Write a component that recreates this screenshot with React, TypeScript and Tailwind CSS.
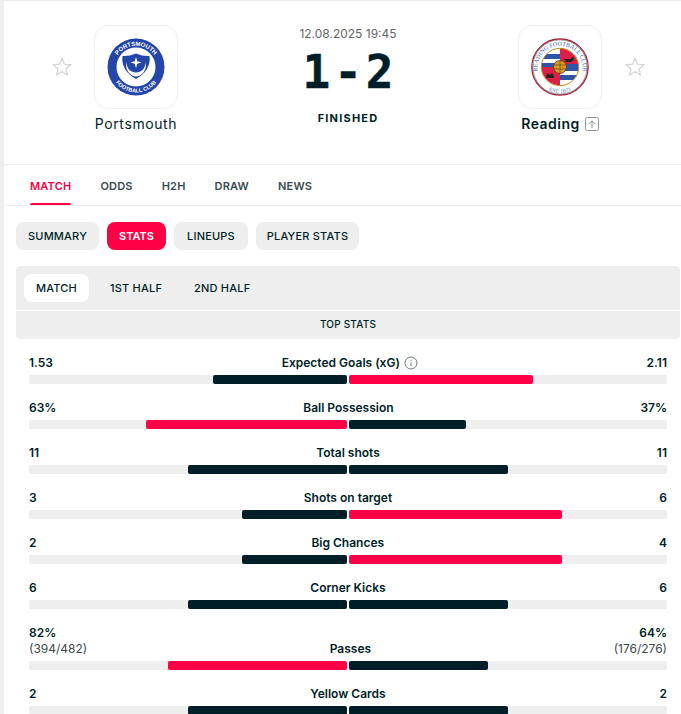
const stats = [
  { left: '1.53', right: '2.11', label: 'Expected Goals (xG)', l: 42.1, r: 57.9, info: true },
  { left: '63%', right: '37%', label: 'Ball Possession', l: 63.2, r: 36.8 },
  { left: '11', right: '11', label: 'Total shots', l: 50, r: 50 },
  { left: '3', right: '6', label: 'Shots on target', l: 33, r: 67 },
  { left: '2', right: '4', label: 'Big Chances', l: 33, r: 67 },
  { left: '6', right: '6', label: 'Corner Kicks', l: 50, r: 50 },
];

function Star() {
  return (
    <svg width="20" height="20" viewBox="0 0 20 20" fill="none" stroke="#d3d6d6" strokeWidth="1.3">
      <path d="M10 1.5l2.5 5.7 6.2.6-4.7 4.1 1.4 6.1L10 14.8l-5.4 3.2L6 11.9 1.3 7.8l6.2-.6z" />
    </svg>
  );
}

function Portsmouth() {
  return (
    <svg width="58" height="58" viewBox="0 0 58 58">
      <circle cx="29" cy="29" r="28.5" fill="#2446a8" />
      <circle cx="29" cy="29" r="19.5" fill="#fff" />
      <path d="M15.500 18Q22 18.500 29 15.500Q36 18.500 42.500 18C44 28 38 36 29 41C20 36 14 28 15.500 18z" fill="#2446a8" />
      <path d="M19 24C18 33 24 38.500 29 38.500C34 38.500 40 33 39 24C38 31 34 34.500 29 34.500C24 34.500 20 31 19 24z" fill="#fff" />
      <path d="M29 19l1.300 4.200 4.200 1.300-4.200 1.300-1.300 4.200-1.300-4.200-4.200-1.300 4.200-1.300z" fill="#fff" />
      <defs>
        <path id="pTop" d="M7 35A22.500 22.500 0 1 1 51 35" />
        <path id="pBottom" d="M6 40A25.500 25.500 0 0 0 52 40" />
      </defs>
      <text fontFamily="Liberation Sans, sans-serif" fontSize="6" fontWeight="700" fill="#fff">
        <textPath href="#pTop" startOffset="50%" textAnchor="middle">PORTSMOUTH</textPath>
      </text>
      <text fontFamily="Liberation Sans, sans-serif" fontSize="5.500" fontWeight="700" fill="#fff">
        <textPath href="#pBottom" startOffset="50%" textAnchor="middle">FOOTBALL CLUB</textPath>
      </text>
    </svg>
  );
}

function Reading() {
  return (
    <svg width="58" height="58" viewBox="0 0 58 58">
      <circle cx="29" cy="29" r="28.200" fill="#fff" stroke="#b3162f" strokeWidth="1.200" />
      <circle cx="29" cy="29" r="27.200" fill="none" stroke="#222" strokeWidth=".5" />
      <defs>
        <clipPath id="shield"><circle cx="29" cy="29" r="18.500" /></clipPath>
        <path id="rTop" d="M8 39A22.700 22.700 0 1 1 50 39" />
        <path id="rBottom" d="M15 51A26 26 0 0 0 43 51" />
      </defs>
      <text fontFamily="Liberation Serif, serif" fontSize="6" fill="#3a66b0">
        <textPath href="#rTop" startOffset="50%" textAnchor="middle">READING FOOTBALL CLUB</textPath>
      </text>
      <text fontFamily="Liberation Serif, serif" fontSize="5.500" fill="#3a66b0">
        <textPath href="#rBottom" startOffset="50%" textAnchor="middle">EST. 1871</textPath>
      </text>
      <g clipPath="url(#shield)">
        <rect x="10" y="10" width="19" height="19" fill="#fff" />
        <rect x="10" y="16" width="19" height="5" fill="#2c55a8" />
        <rect x="10" y="25" width="19" height="4" fill="#2c55a8" />
        <rect x="29" y="10" width="19" height="19" fill="#dc1f48" />
        <rect x="10" y="29" width="19" height="19" fill="#dc1f48" />
        <rect x="29" y="29" width="19" height="19" fill="#fff" />
        <rect x="29" y="29" width="19" height="4" fill="#2c55a8" />
        <rect x="29" y="37" width="19" height="5" fill="#2c55a8" />
        <rect x="36" y="26" width="12" height="4" fill="#2c55a8" />
        <path d="M33 21h7l2-3 1 4-3 2h-5z" fill="#222" />
        <path d="M15 38l2-3 2 2 2-2 2 3v2h-8z" fill="#222" />
      </g>
      <circle cx="29" cy="29" r="18.700" fill="none" stroke="#c68a1d" strokeWidth="1" />
      <circle cx="29" cy="29" r="6.500" fill="#d9982a" stroke="#5c3c0a" strokeWidth=".8" />
      <path d="M23 27h12M23 31h12M29 23v12" stroke="#5c3c0a" strokeWidth=".6" />
    </svg>
  );
}

function Bar({ l, r, lRed, rRed }: { l: number; r: number; lRed: boolean; rRed: boolean }) {
  return (
    <div className="flex gap-[2px] h-[9px]">
      <div className="flex-1 flex justify-end bg-[#eeeeee] rounded-l-[2px]">
        <div className={`rounded-[2px] ${lRed ? 'bg-[#ff0046]' : 'bg-[#001e28]'}`} style={{ width: `${l}%` }} />
      </div>
      <div className="flex-1 flex bg-[#eeeeee] rounded-r-[2px]">
        <div className={`rounded-[2px] ${rRed ? 'bg-[#ff0046]' : 'bg-[#001e28]'}`} style={{ width: `${r}%` }} />
      </div>
    </div>
  );
}

function StatRow({ left, right, label, l, r, info }: { left: string; right: string; label: string; l: number; r: number; info?: boolean }) {
  return (
    <div className="h-[45px]">
      <div className="flex justify-between items-center h-[16px] mb-[4px] text-[12px] font-semibold tracking-normal text-[#001e28]">
        <span>{left}</span>
        <span className="flex items-center gap-[4px]">
          {label}
          {info && (
            <svg width="14" height="14" viewBox="0 0 14 14" fill="none" stroke="#6d7a7f" strokeWidth="1">
              <circle cx="7" cy="7" r="6" />
              <path d="M7 6.200v4M7 3.800v1" />
            </svg>
          )}
        </span>
        <span>{right}</span>
      </div>
      <Bar l={l} r={r} lRed={l > r} rRed={r > l} />
    </div>
  );
}

export default function App() {
  return (
    <div className="w-[681px] h-[714px] overflow-hidden bg-[#eeeeee] pl-[4px] pt-[1px] font-['Inter',sans-serif] text-[#001e28]">
      <div className="bg-white h-[713px]">
        {/* Header */}
        <div className="h-[164px] border-b border-[#eeeeee] flex pt-[24px]">
          <div className="w-[270px] flex">
            <div className="w-[90px] pt-[32px] pl-[48px] shrink-0"><Star /></div>
            <div className="flex flex-col items-center w-[84px]">
              <div className="w-[84px] h-[84px] border border-[#eeeeee] rounded-[14px] flex items-center justify-center shrink-0">
                <Portsmouth />
              </div>
              <div className="mt-[4px] text-[14px] tracking-[0.6px] whitespace-nowrap">Portsmouth</div>
            </div>
          </div>
          <div className="w-[148px] flex flex-col items-center">
            <div className="text-[12px] text-[#666] h-[16px] whitespace-nowrap">12.08.2025 19:45</div>
            <div className="font-['DejaVu_Sans_Mono',monospace] font-bold text-[46px] leading-[46px] mt-[8px] pl-[4px] tracking-[4px] [-webkit-text-stroke:0.5px_#001e28]">1-2</div>
            <div className="text-[11px] font-bold tracking-[1.2px] mt-[15px]">FINISHED</div>
          </div>
          <div className="flex-1 flex pl-[96px]">
            <div className="flex flex-col items-center w-[84px]">
              <div className="w-[84px] h-[84px] border border-[#eeeeee] rounded-[14px] flex items-center justify-center shrink-0">
                <Reading />
              </div>
              <div className="mt-[4px] flex items-center gap-[5px] text-[14px] font-semibold tracking-[0.5px] whitespace-nowrap">
                Reading
                <svg width="14" height="14" viewBox="0 0 14 14" fill="none" stroke="#8a9497" strokeWidth="1">
                  <rect x=".5" y=".5" width="13" height="13" rx="2" />
                  <path d="M7 11V4M3.800 7L7 3.800 10.200 7" />
                </svg>
              </div>
            </div>
            <div className="pt-[32px] pl-[23px] shrink-0"><Star /></div>
          </div>
        </div>

        {/* Main tabs */}
        <div className="h-[41px] border-b border-[#eeeeee] flex gap-[29px] pl-[26px] text-[11px] font-semibold tracking-[0.2px] text-[#3a4a50]">
          <div className="relative pt-[13px] text-[#ff0046]">
            MATCH
            <div className="absolute left-0 right-0 bottom-0 h-[2px] bg-[#ff0046] rounded-t-[2px]" />
          </div>
          <div className="pt-[13px]">ODDS</div>
          <div className="pt-[13px]">H2H</div>
          <div className="pt-[13px]">DRAW</div>
          <div className="pt-[13px]">NEWS</div>
        </div>

        {/* Sub tabs */}
        <div className="flex gap-[8px] pl-[12px] mt-[16px] text-[11px] font-medium tracking-[0.2px] whitespace-nowrap">
          <div className="w-[83px] h-[28px] flex items-center justify-center bg-[#eeeeee] rounded-[8px]">SUMMARY</div>
          <div className="w-[59px] h-[28px] flex items-center justify-center bg-[#ff0046] text-white rounded-[8px] font-semibold tracking-normal">STATS</div>
          <div className="w-[74px] h-[28px] flex items-center justify-center bg-[#eeeeee] rounded-[8px]">LINEUPS</div>
          <div className="w-[103px] h-[28px] flex items-center justify-center bg-[#eeeeee] rounded-[8px]">PLAYER STATS</div>
        </div>

        {/* Period tabs */}
        <div className="ml-[12px] mr-[1px] mt-[16px] h-[44px] bg-[#eeeeee] rounded-t-[4px] flex items-center pl-[8px] text-[11px] font-medium tracking-[0.2px] whitespace-nowrap">
          <div className="w-[65px] h-[28px] flex items-center justify-center bg-white rounded-[8px]">MATCH</div>
          <div className="ml-[21px]">1ST HALF</div>
          <div className="ml-[32px]">2ND HALF</div>
        </div>
        <div className="ml-[12px] mr-[1px] mt-[1px] h-[28px] pb-[1px] bg-[#eeeeee] rounded-b-[4px] flex items-center justify-center text-[10px] font-medium tracking-[0.2px]">TOP STATS</div>

        {/* Stats */}
        <div className="pl-[25px] pr-[14px] pt-[16px]">
          {stats.map(s => (
            <StatRow key={s.label} {...s} />
          ))}
          <div className="h-[61px]">
            <div className="flex justify-between items-end h-[32px] mb-[4px] text-[12px] leading-[16px]">
              <div>
                <div className="font-semibold">82%</div>
                <div className="text-[#3a4a50] font-normal">(394/482)</div>
              </div>
              <span className="font-semibold">Passes</span>
              <div className="text-right">
                <div className="font-semibold">64%</div>
                <div className="text-[#3a4a50] font-normal">(176/276)</div>
              </div>
            </div>
            <Bar l={56.3} r={43.7} lRed rRed={false} />
          </div>
          <StatRow left="2" right="2" label="Yellow Cards" l={50} r={50} />
        </div>
      </div>
    </div>
  );
}
